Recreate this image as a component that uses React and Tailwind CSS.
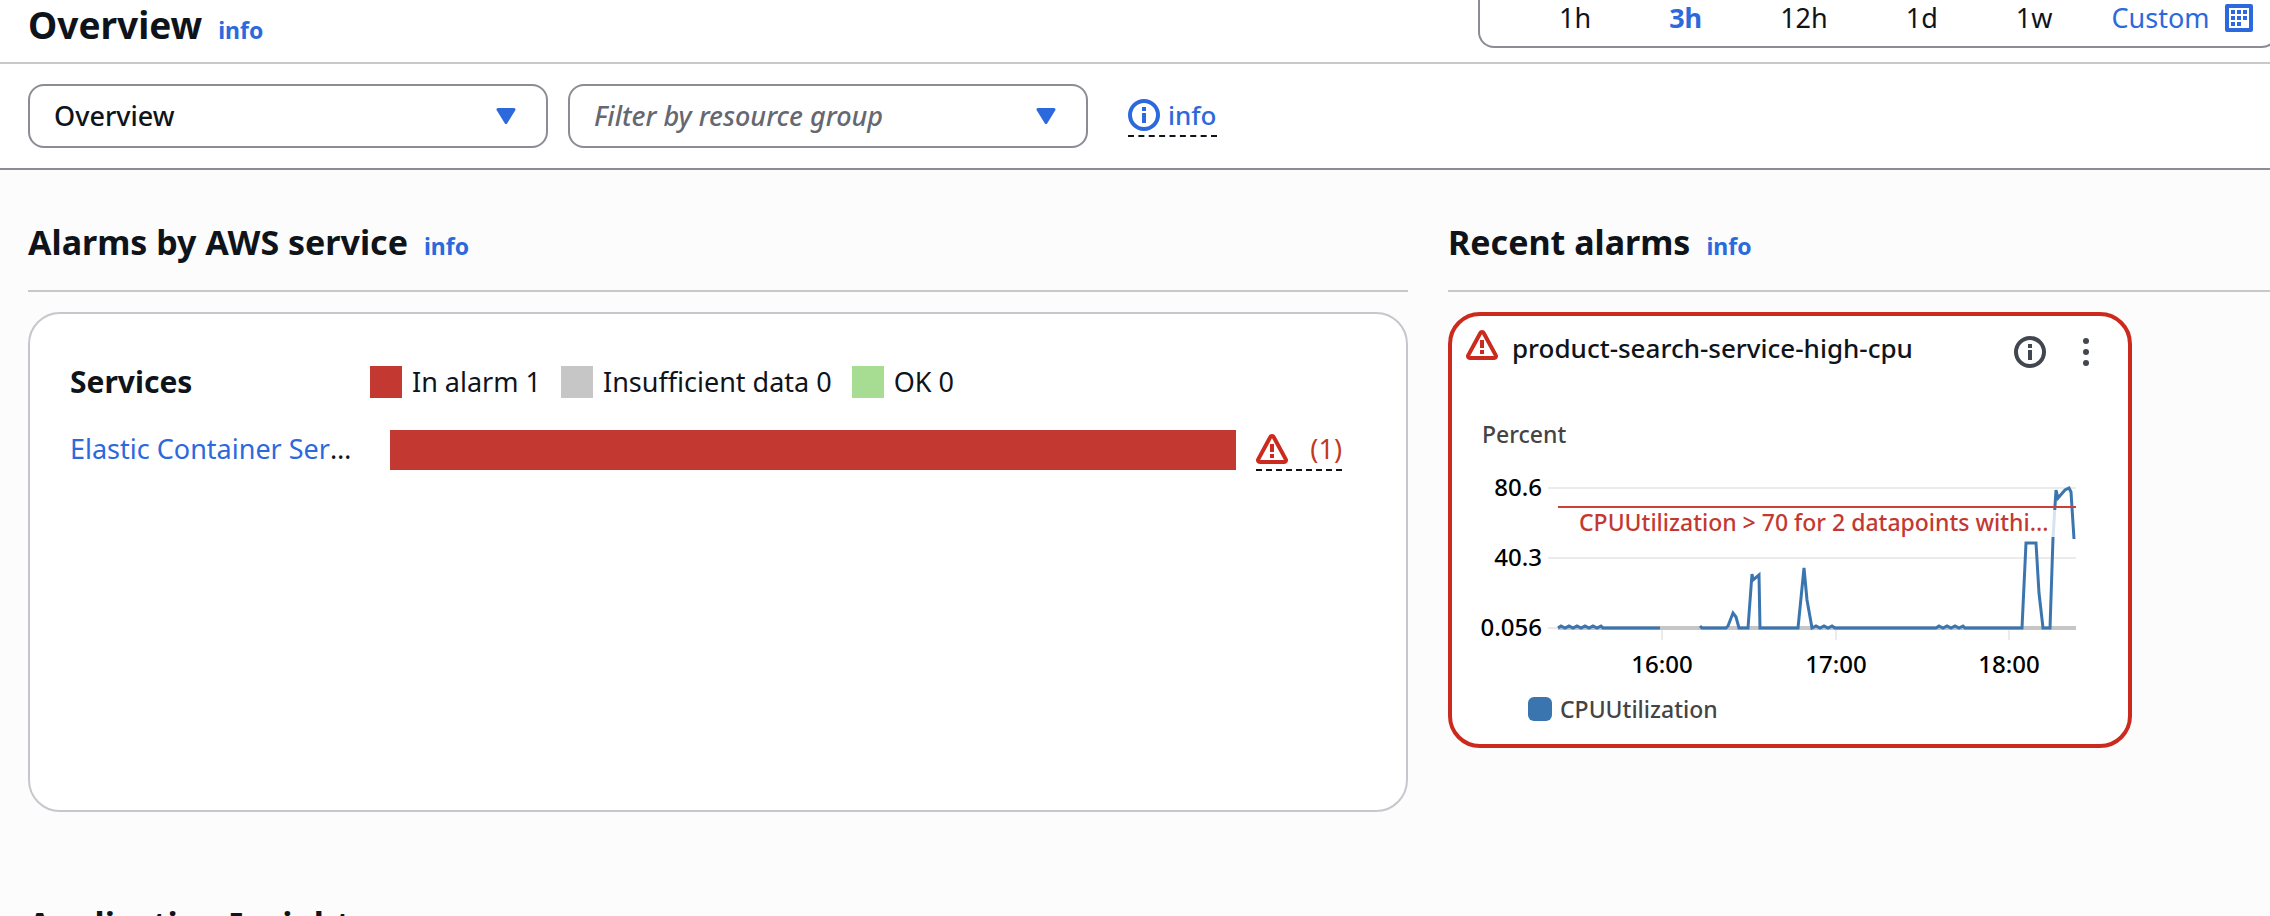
const ranges = ["1h", "3h", "12h", "1d", "1w"];

const legend = [
  { label: "In alarm 1", swatch: "bg-[#c33931]" },
  { label: "Insufficient data 0", swatch: "bg-[#c6c6c6]" },
  { label: "OK 0", swatch: "bg-[#a7dc93]" },
];

function InfoIcon({ className }) {
  return (
    <svg viewBox="0 0 32 32" className={className} fill="none" stroke="currentColor" aria-hidden="true">
      <circle cx="16" cy="16" r="14" strokeWidth="4" />
      <path d="M16 14v10M16 8v4" strokeWidth="4" />
    </svg>
  );
}

function WarningIcon({ className }) {
  return (
    <svg viewBox="0 0 32 30" className={className} fill="none" stroke="#cb2a1e" strokeWidth="4" aria-hidden="true">
      <path d="M14.2 3.2a2 2 0 0 1 3.6 0l12 22.2a1.8 1.8 0 0 1-1.6 2.6H3.8a1.8 1.8 0 0 1-1.6-2.6z" strokeLinejoin="round" />
      <path d="M16 10v8M16 20v4" />
    </svg>
  );
}

function CalendarIcon() {
  const cells = [
    [6, 6], [12, 6], [18, 6],
    [6, 12], [12, 12], [18, 12],
    [6, 18], [12, 18],
  ];
  return (
    <svg viewBox="0 0 28 28" className="size-7 shrink-0" aria-hidden="true">
      <rect x="2" y="2" width="24" height="24" fill="none" stroke="currentColor" strokeWidth="4" strokeLinejoin="round" />
      {cells.map(([x, y]) => (
        <rect key={`${x}-${y}`} x={x} y={y} width="4" height="4" fill="currentColor" />
      ))}
    </svg>
  );
}

function SelectBox({ label, value, className }) {
  return (
    <div className="grid w-[520px] items-center">
      <select
        aria-label={label}
        className={`col-start-1 row-start-1 h-16 w-full appearance-none rounded-2xl border-2 border-[#8c8c94] bg-white pr-16 pl-6 text-[27px] ${className}`}
      >
        <option>{value}</option>
      </select>
      <svg viewBox="0 0 20 16" className="pointer-events-none col-start-1 row-start-1 mr-8 h-4 w-5 justify-self-end" aria-hidden="true">
        <path d="M2 1.5h16L10 14.5z" fill="#2c69dc" stroke="#2c69dc" strokeWidth="3" strokeLinejoin="round" />
      </svg>
    </div>
  );
}

function InfoLink() {
  return (
    <a href="#info" className="text-[23px] font-bold text-[#2c69dc]">
      info
    </a>
  );
}

function SectionHeader({ title }) {
  return (
    <div className="flex items-baseline gap-4 border-b-2 border-[#c9c9c9] pt-11 pb-5">
      <h2 className="text-[34px] leading-14 font-bold">{title}</h2>
      <InfoLink />
    </div>
  );
}

function CpuChart() {
  const hours = [
    { x: 210, label: "16:00" },
    { x: 384, label: "17:00" },
    { x: 557, label: "18:00" },
  ];
  const levels = [
    { y: 76, label: "80.6" },
    { y: 146, label: "40.3" },
    { y: 216, label: "0.056" },
  ];
  return (
    <svg viewBox="0 0 676 276" className="w-full" role="img" aria-label="CPUUtilization">
      <text x="30" y="31" fontSize="23" fill="#444">Percent</text>
      <g stroke="#ebebeb" strokeWidth="2">
        {levels.map((l) => (
          <path key={l.label} d={`M96 ${l.y}H624`} />
        ))}
        {hours.map((h) => (
          <path key={h.label} d={`M${h.x} 218v10`} />
        ))}
      </g>
      <path d="M106 216H624" stroke="#c6c6c6" strokeWidth="4" />
      <g fill="none" stroke="#3b75af" strokeWidth="3">
        <path d="M106 216l3-2 4 2 4-2 4 2 4-2 4 2 4-2 4 2 4-2 4 2 4-2 2 2H208" />
        <path d="M248 214l2 2H274l2-2 5-13 3 4 3 11H296l4-54 1 6 6-5 1 53H346l6-60 3 32 5 28 4-2 4 2 4-2 4 2 4-2 3 2H484l3-2 4 2 4-2 4 2 4-2 4 2 4-2 2 2H570l4-85H584l3 50 4 35H598l3-90 3-48 2 8 7-8 4-2 2 4 3 47" />
      </g>
      <rect x="122" y="98" width="483" height="27" fill="#fff" fillOpacity="0.8" />
      <path d="M106 95H624" stroke="#cb4039" strokeWidth="2" />
      <text x="127" y="119" fontSize="23" fill="#c33931">
        CPUUtilization &gt; 70 for 2 datapoints withi...
      </text>
      <g fontSize="24" fill="#000">
        {levels.map((l) => (
          <text key={l.label} x="90" y={l.y + 8} textAnchor="end">{l.label}</text>
        ))}
        {hours.map((h) => (
          <text key={h.label} x={h.x} y="261" textAnchor="middle">{h.label}</text>
        ))}
      </g>
    </svg>
  );
}

export default function App() {
  return (
    <div className="h-screen overflow-hidden bg-[#fcfcfc] font-['Noto_Sans',sans-serif] text-[26px] font-medium text-[#0f141a]">
      <header className="flex h-16 items-start justify-between border-b-2 border-[#c9c9c9] bg-white pl-7">
        <div className="flex items-baseline gap-4">
          <h1 className="text-[37px] leading-[50px] font-bold">Overview</h1>
          <InfoLink />
        </div>
        <div className="-mr-2 flex h-12 w-[800px] items-start rounded-b-2xl border-2 border-t-0 border-[#8c8c94] pl-10 text-[27px] leading-9 font-normal">
          {ranges.map((r) => (
            <button key={r} type="button" className={r === "3h" ? "px-[39px] font-bold text-[#2c69dc]" : "px-[39px]"}>
              {r}
            </button>
          ))}
          <button type="button" className="flex items-center gap-4 pl-5 text-[#2c69dc]">
            Custom
            <CalendarIcon />
          </button>
        </div>
      </header>

      <div className="flex items-center gap-5 border-b-2 border-[#8c8c94] bg-white px-7 py-5">
        <SelectBox label="Dashboard view" value="Overview" className="text-[#0f141a]" />
        <SelectBox label="Resource group" value="Filter by resource group" className="text-[#656871] italic" />
        <a href="#info" className="ml-5 flex items-center gap-2 border-b-2 border-dashed border-[#0f141a] text-[#2c69dc]">
          <InfoIcon className="size-8" />
          info
        </a>
      </div>

      <main className="grid grid-cols-[1380fr_822fr] gap-x-10 pl-7">
        <section>
          <SectionHeader title="Alarms by AWS service" />
          <div className="mt-5 h-[500px] rounded-4xl border-2 border-[#c6c6cd] bg-white px-10 pt-12">
            <div className="flex items-center">
              <h3 className="w-[300px] text-[30px] leading-10 font-bold">Services</h3>
              <ul className="flex gap-5 text-[27px] font-normal">
                {legend.map((item) => (
                  <li key={item.label} className="flex items-center gap-2.5">
                    <span className={`size-8 ${item.swatch}`} />
                    {item.label}
                  </li>
                ))}
              </ul>
            </div>
            <div className="mt-6.5 flex items-center text-[27px] font-normal">
              <div className="w-[288px] shrink-0 truncate">
                <a href="#ecs" className="text-[#2c69dc]">Elastic Container Service</a>
              </div>
              <div className="ml-8 h-10 grow bg-[#c33931]" />
              <a href="#alarms" className="mr-6 ml-5 flex items-center gap-[22px] border-b-2 border-dashed border-[#0f141a] leading-10 text-[#bf3a1e]">
                <WarningIcon className="h-[30px] w-8" />
                (1)
              </a>
            </div>
          </div>
        </section>

        <section>
          <SectionHeader title="Recent alarms" />
          <article className="mt-5 h-[436px] max-w-[684px] rounded-4xl border-4 border-[#cb2a1e] bg-white">
            <div className="flex h-24 items-start pt-3 pr-6.5 pl-3.5">
              <WarningIcon className="mt-0.5 h-[30px] w-8" />
              <h3 className="ml-3.5 grow leading-10">product-search-service-high-cpu</h3>
              <button type="button" aria-label="Alarm details" className="mt-2 text-[#424650]">
                <InfoIcon className="size-8" />
              </button>
              <button type="button" aria-label="Alarm actions" className="mt-2 ml-6 text-[#424650]">
                <svg viewBox="0 0 32 32" className="size-8" fill="currentColor" aria-hidden="true">
                  <circle cx="16" cy="5" r="3" />
                  <circle cx="16" cy="16" r="3" />
                  <circle cx="16" cy="27" r="3" />
                </svg>
              </button>
            </div>
            <CpuChart />
            <p className="ml-19 flex items-center gap-2 pt-1 text-[23px] text-[#444]">
              <span className="size-6 rounded-md bg-[#3b75af]" />
              CPUUtilization
            </p>
          </article>
        </section>

        <section className="pt-10">
          <SectionHeader title="Application Insights" />
        </section>
      </main>
    </div>
  );
}
